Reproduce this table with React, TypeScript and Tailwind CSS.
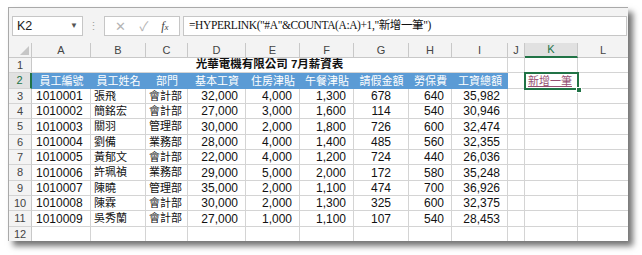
import { memo } from 'react'

const COLS = ['A', 'B', 'C', 'D', 'E', 'F', 'G', 'H', 'I', 'J', 'K', 'L']

// widths: row header, then A..L
const W = [
  'w-[23px]',
  'w-[59px]',
  'w-[55px]',
  'w-[42px]',
  'w-[58px]',
  'w-[54px]',
  'w-[54px]',
  'w-[55px]',
  'w-[43px]',
  'w-[56px]',
  'w-[17px]',
  'w-[53px]',
  'w-[51px]',
]

const ROW_H = [
  'h-[15px]',
  'h-[15px]',
  'h-[16px]',
  'h-[15px]',
  'h-[15px]',
  'h-[16px]',
  'h-[15px]',
  'h-[15px]',
  'h-[16px]',
  'h-[15px]',
]

const HEAD = ['員工編號', '員工姓名', '部門', '基本工資', '住房津貼', '午餐津貼', '請假金額', '勞保費', '工資總額']

const DATA: string[][] = [
  ['1010001', '張飛', '會計部', '32,000', '4,000', '1,300', '678', '640', '35,982'],
  ['1010002', '簡銘宏', '會計部', '27,000', '3,000', '1,600', '114', '540', '30,946'],
  ['1010003', '關羽', '管理部', '30,000', '2,000', '1,800', '726', '600', '32,474'],
  ['1010004', '劉備', '業務部', '28,000', '4,000', '1,400', '485', '560', '32,355'],
  ['1010005', '黃郁文', '會計部', '22,000', '4,000', '1,200', '724', '440', '26,036'],
  ['1010006', '許珮禎', '業務部', '29,000', '5,000', '2,000', '172', '580', '35,248'],
  ['1010007', '陳曉', '管理部', '35,000', '2,000', '1,100', '474', '700', '36,926'],
  ['1010008', '陳霖', '會計部', '30,000', '2,000', '1,300', '325', '600', '32,375'],
  ['1010009', '吳秀蘭', '會計部', '27,000', '1,000', '1,100', '107', '540', '28,453'],
  ['', '', '', '', '', '', '', '', ''],
]

const FONT = "font-['Liberation_Sans','Noto_Sans_CJK_TC',sans-serif]"

const RowHeader = memo(function RowHeader({ n, h, active }: { n: number; h: string; active?: boolean }) {
  return (
    <div
      className={`${W[0]} ${h} shrink-0 flex items-center justify-center text-[11px] border-b border-[#d4d4d4] ${
        active
          ? 'bg-[#e1e1e1] text-[#217346] border-r-2 border-r-[#217346]'
          : 'bg-[#f3f3f3] text-[#444] border-r border-r-[#c8c8c8]'
      }`}
    >
      {n}
    </div>
  )
})

function cellAlign(ci: number) {
  if (ci <= 2) return ci === 0 ? 'justify-start pl-[4px] text-[12px]' : 'justify-start pl-[3px] text-[11px]'
  if (ci === 6) return 'justify-center text-[12px]'
  return 'justify-end pr-[7px] text-[12px]'
}

export default function App() {
  return (
    <div className={`w-[642px] h-[255px] bg-white pl-[8px] pt-[7px] ${FONT}`}>
      <div className="w-[620px] h-[234px] bg-[#f3f3f3] border-l border-t border-[#a9a9a9] shadow-[5px_5px_6px_rgba(0,0,0,0.55)] flex flex-col overflow-hidden">
        {/* formula bar */}
        <div className="h-[35px] shrink-0 flex items-start pt-[8px] pl-[3px] pr-[1px] gap-0">
          <div className="w-[71px] h-[20px] bg-white border border-[#c6c6c6] flex items-center justify-between pl-[4px] pr-[4px] text-[12.5px] text-[#222]">
            <span>K2</span>
            <span className="text-[8px] text-[#555]">▼</span>
          </div>
          <div className="w-[21px] h-[20px] flex items-center justify-center text-[11px] text-[#a0a0a0]">⋮</div>
          <div className="w-[76px] h-[20px] bg-white border border-[#c6c6c6] flex items-center justify-around px-[4px]">
            <span className="text-[13px] text-[#b4b4b4] leading-none">✕</span>
            <span className="text-[13px] text-[#b4b4b4] leading-none">✓</span>
            <span className="font-['Liberation_Serif',serif] italic text-[12px] text-[#444] leading-none">
              f<span className="text-[9px]">x</span>
            </span>
          </div>
          <div className="ml-[3px] flex-1 h-[20px] bg-white border border-[#c6c6c6] flex items-center pl-[5px] font-['Liberation_Serif','Noto_Sans_CJK_TC',serif] text-[11.5px] tracking-[-0.4px] text-[#111]">
            =HYPERLINK("#A"&amp;COUNTA(A:A)+1,"新增一筆")
          </div>
        </div>

        {/* column headers */}
        <div className="flex h-[15px] shrink-0">
          <div className={`${W[0]} shrink-0 bg-[#f3f3f3] border-r border-b border-[#c8c8c8] relative`}>
            <div className="absolute right-[2px] bottom-[2px] w-0 h-0 border-l-[9px] border-l-transparent border-b-[9px] border-b-[#c6c6c6]" />
          </div>
          {COLS.map((c, i) =>
            c === 'K' ? (
              <div
                key={c}
                className={`${W[i + 1]} shrink-0 bg-[#e1e1e1] text-[#217346] border-r border-r-[#c8c8c8] border-b-2 border-b-[#217346] flex items-center justify-center text-[11px]`}
              >
                {c}
              </div>
            ) : (
              <div
                key={c}
                className={`${W[i + 1]} shrink-0 bg-[#f3f3f3] text-[#444] border-r border-b border-[#c8c8c8] flex items-center justify-center text-[11px]`}
              >
                {c}
              </div>
            ),
          )}
        </div>

        <div className="bg-white flex-1 flex flex-col">
          {/* row 1: merged title */}
          <div className="flex h-[15px] shrink-0">
            <RowHeader n={1} h="h-[15px]" />
            <div className="w-[476px] shrink-0 border-r border-b border-[#d4d4d4] flex items-center justify-center font-bold text-[11.5px] text-[#111]">
              光華電機有限公司 7月薪資表
            </div>
            <div className={`${W[10]} shrink-0 border-r border-b border-[#d4d4d4]`} />
            <div className={`${W[11]} shrink-0 border-r border-b border-[#d4d4d4]`} />
            <div className={`${W[12]} shrink-0 border-r border-b border-[#d4d4d4]`} />
          </div>

          {/* row 2: header */}
          <div className="flex h-[16px] shrink-0">
            <RowHeader n={2} h="h-[16px]" active />
            {HEAD.map((t, i) => (
              <div
                key={t}
                className={`${W[i + 1]} shrink-0 bg-[#5b9bd5] text-white flex items-center justify-center text-[11px]`}
              >
                {t}
              </div>
            ))}
            <div className={`${W[10]} shrink-0 border-r border-b border-[#d4d4d4]`} />
            <div className={`${W[11]} shrink-0 relative flex items-center pl-[3px]`}>
              <span className="text-[11px] text-[#954f72] underline underline-offset-[1px] leading-none">新增一筆</span>
              <div className="absolute -left-[1px] -top-[1px] -right-[1px] -bottom-[1px] border-2 border-[#217346]" />
              <div className="absolute -right-[4px] -bottom-[4px] w-[6px] h-[6px] bg-[#217346] border border-white" />
            </div>
            <div className={`${W[12]} shrink-0 border-r border-b border-[#d4d4d4]`} />
          </div>

          {/* data rows */}
          {DATA.map((row, ri) => (
            <div key={ri} className="flex shrink-0">
              <RowHeader n={ri + 3} h={ROW_H[ri]} />
              {row.map((v, ci) => (
                <div
                  key={ci}
                  className={`${W[ci + 1]} ${ROW_H[ri]} shrink-0 border-r border-b border-[#d4d4d4] flex items-center text-[#111] ${cellAlign(ci)}`}
                >
                  {v}
                </div>
              ))}
              <div className={`${W[10]} ${ROW_H[ri]} shrink-0 border-r border-b border-[#d4d4d4]`} />
              <div className={`${W[11]} ${ROW_H[ri]} shrink-0 border-r border-b border-[#d4d4d4]`} />
              <div className={`${W[12]} ${ROW_H[ri]} shrink-0 border-r border-b border-[#d4d4d4]`} />
            </div>
          ))}
        </div>
      </div>
    </div>
  )
}
